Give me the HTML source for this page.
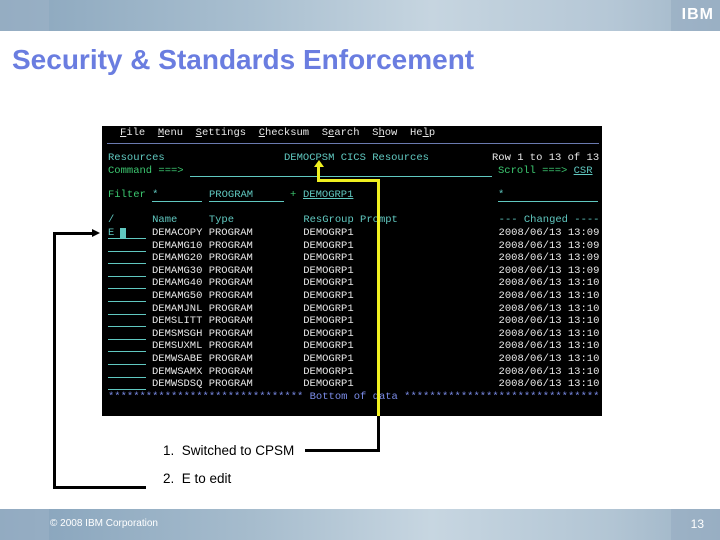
<!DOCTYPE html>
<html><head><meta charset="utf-8"><style>
*{margin:0;padding:0}
body{width:720px;height:540px;position:relative;background:#fff;overflow:hidden;font-family:"Liberation Sans",sans-serif}
.hdr{position:absolute;left:0;top:0;width:720px;height:31px;background:linear-gradient(90deg,#8aa6bd 0%,#a9bfd0 35%,#c6d5e0 60%,#b5c7d6 85%,#a0b6c8 100%)}
.ftr{position:absolute;left:0;top:509px;width:720px;height:31px;background:linear-gradient(90deg,#85a2bb 0%,#a6bccd 35%,#c7d6e1 60%,#b2c5d4 85%,#9bb2c5 100%)}
.lseg{position:absolute;left:0;top:0;width:49px;height:100%;background:rgba(160,180,200,.5)}
.rseg{position:absolute;right:0;top:0;width:49px;height:100%;background:rgba(150,172,193,.6)}
h1{position:absolute;left:12px;top:44px;font-size:28px;color:#6a7de0;font-weight:bold;white-space:nowrap}
.term{position:absolute;left:102px;top:126px;width:500px;height:290px;background:#000}
.t{position:absolute;font-family:"Liberation Mono",monospace;font-size:10.5px;line-height:12px;white-space:pre;color:#60c8c0}
.w{color:#e8e8e8}.g{color:#3cc870}.b{color:#7b8ce8}.u{text-decoration:underline}
.ln{position:absolute;background:#60c8c0;height:1px}
.y{position:absolute;background:#f0f020}
.k{position:absolute;background:#000}
.lbl{position:absolute;font-size:13.5px;color:#000}
</style></head><body>
<div class="hdr"><div class="lseg"></div><div class="rseg"></div>
<div style="position:absolute;right:6px;top:6px;font:bold 16px 'Liberation Sans',sans-serif;color:#fff;letter-spacing:1px">IBM</div></div>
<h1>Security &amp; Standards Enforcement</h1>
<div class="term">
<div class="t w" style="left:18px;top:1px"><span class="u">F</span>ile  <span class="u">M</span>enu  <span class="u">S</span>ettings  <span class="u">C</span>hecksum  S<span class="u">e</span>arch  S<span class="u">h</span>ow  He<span class="u">l</span>p</div>
<div style="position:absolute;left:5px;top:17px;width:492px;height:1px;background:#6a7ab0"></div>
<div class="t" style="left:6px;top:26px">Resources</div>
<div class="t" style="left:182px;top:26px">DEMOCPSM CICS Resources</div>
<div class="t w" style="left:390px;top:26px">Row 1 to 13 of 13</div>
<div class="t g" style="left:6px;top:39px">Command ===></div>
<div class="ln" style="left:88px;top:50px;width:302px"></div>
<div class="t g" style="left:396px;top:39px">Scroll ===> <span class="u" style="color:#60c8c0">CSR</span></div>
<div class="t g" style="left:6px;top:63px">Filter <span style="color:#60c8c0">*</span></div>
<div class="ln" style="left:50px;top:75px;width:50px"></div>
<div class="t" style="left:107px;top:63px">PROGRAM</div>
<div class="ln" style="left:107px;top:75px;width:75px"></div>
<div class="t g" style="left:188px;top:63px">+</div>
<div class="t u" style="left:201px;top:63px">DEMOGRP1</div>
<div class="t" style="left:396px;top:63px">*</div>
<div class="ln" style="left:396px;top:75px;width:100px"></div>
<div class="t" style="left:6px;top:88px">/      Name     Type           ResGroup Prompt                --- Changed ----</div>
<div class="t" style="left:6px;top:101px">E</div>
<div style="position:absolute;left:18px;top:102px;width:6px;height:10px;background:#60c8c0"></div>
<div class="ln" style="left:6px;top:112px;width:38px"></div>
<div class="ln" style="left:6px;top:125px;width:38px"></div>
<div class="ln" style="left:6px;top:137px;width:38px"></div>
<div class="ln" style="left:6px;top:150px;width:38px"></div>
<div class="ln" style="left:6px;top:162px;width:38px"></div>
<div class="ln" style="left:6px;top:175px;width:38px"></div>
<div class="ln" style="left:6px;top:188px;width:38px"></div>
<div class="ln" style="left:6px;top:200px;width:38px"></div>
<div class="ln" style="left:6px;top:213px;width:38px"></div>
<div class="ln" style="left:6px;top:225px;width:38px"></div>
<div class="ln" style="left:6px;top:238px;width:38px"></div>
<div class="ln" style="left:6px;top:251px;width:38px"></div>
<div class="ln" style="left:6px;top:263px;width:38px"></div>
<div class="t w" style="left:50px;top:101px;line-height:12.6px">DEMACOPY PROGRAM        DEMOGRP1                       2008/06/13 13:09
DEMAMG10 PROGRAM        DEMOGRP1                       2008/06/13 13:09
DEMAMG20 PROGRAM        DEMOGRP1                       2008/06/13 13:09
DEMAMG30 PROGRAM        DEMOGRP1                       2008/06/13 13:09
DEMAMG40 PROGRAM        DEMOGRP1                       2008/06/13 13:10
DEMAMG50 PROGRAM        DEMOGRP1                       2008/06/13 13:10
DEMAMJNL PROGRAM        DEMOGRP1                       2008/06/13 13:10
DEMSLITT PROGRAM        DEMOGRP1                       2008/06/13 13:10
DEMSMSGH PROGRAM        DEMOGRP1                       2008/06/13 13:10
DEMSUXML PROGRAM        DEMOGRP1                       2008/06/13 13:10
DEMWSABE PROGRAM        DEMOGRP1                       2008/06/13 13:10
DEMWSAMX PROGRAM        DEMOGRP1                       2008/06/13 13:10
DEMWSDSQ PROGRAM        DEMOGRP1                       2008/06/13 13:10</div>
<div class="t b" style="left:6px;top:265px">******************************* Bottom of data *******************************</div>
</div>
<div class="y" style="left:317px;top:165px;width:3px;height:16px"></div>
<div style="position:absolute;left:314px;top:160px;width:0;height:0;border-left:5px solid transparent;border-right:5px solid transparent;border-bottom:7px solid #f0f020"></div>
<div class="y" style="left:317px;top:179px;width:63px;height:3px"></div>
<div class="y" style="left:377px;top:179px;width:3px;height:237px"></div>
<div class="k" style="left:377px;top:416px;width:3px;height:36px"></div>
<div class="k" style="left:305px;top:449px;width:75px;height:3px"></div>
<div class="k" style="left:53px;top:232px;width:3px;height:257px"></div>
<div class="k" style="left:53px;top:232px;width:40px;height:3px"></div>
<div style="position:absolute;left:92px;top:229px;width:0;height:0;border-top:4.5px solid transparent;border-bottom:4.5px solid transparent;border-left:8px solid #000"></div>
<div class="k" style="left:53px;top:486px;width:93px;height:3px"></div>
<div class="lbl" style="left:163px;top:443px">1.&nbsp; Switched to CPSM</div>
<div class="lbl" style="left:163px;top:471px">2.&nbsp; E to edit</div>
<div class="ftr"><div class="lseg"></div><div class="rseg"></div>
<div style="position:absolute;left:50px;top:9px;font-size:10px;color:#fff">© 2008 IBM Corporation</div>
<div style="position:absolute;right:16px;top:8px;font-size:12px;color:#fff">13</div></div>
</body></html>
